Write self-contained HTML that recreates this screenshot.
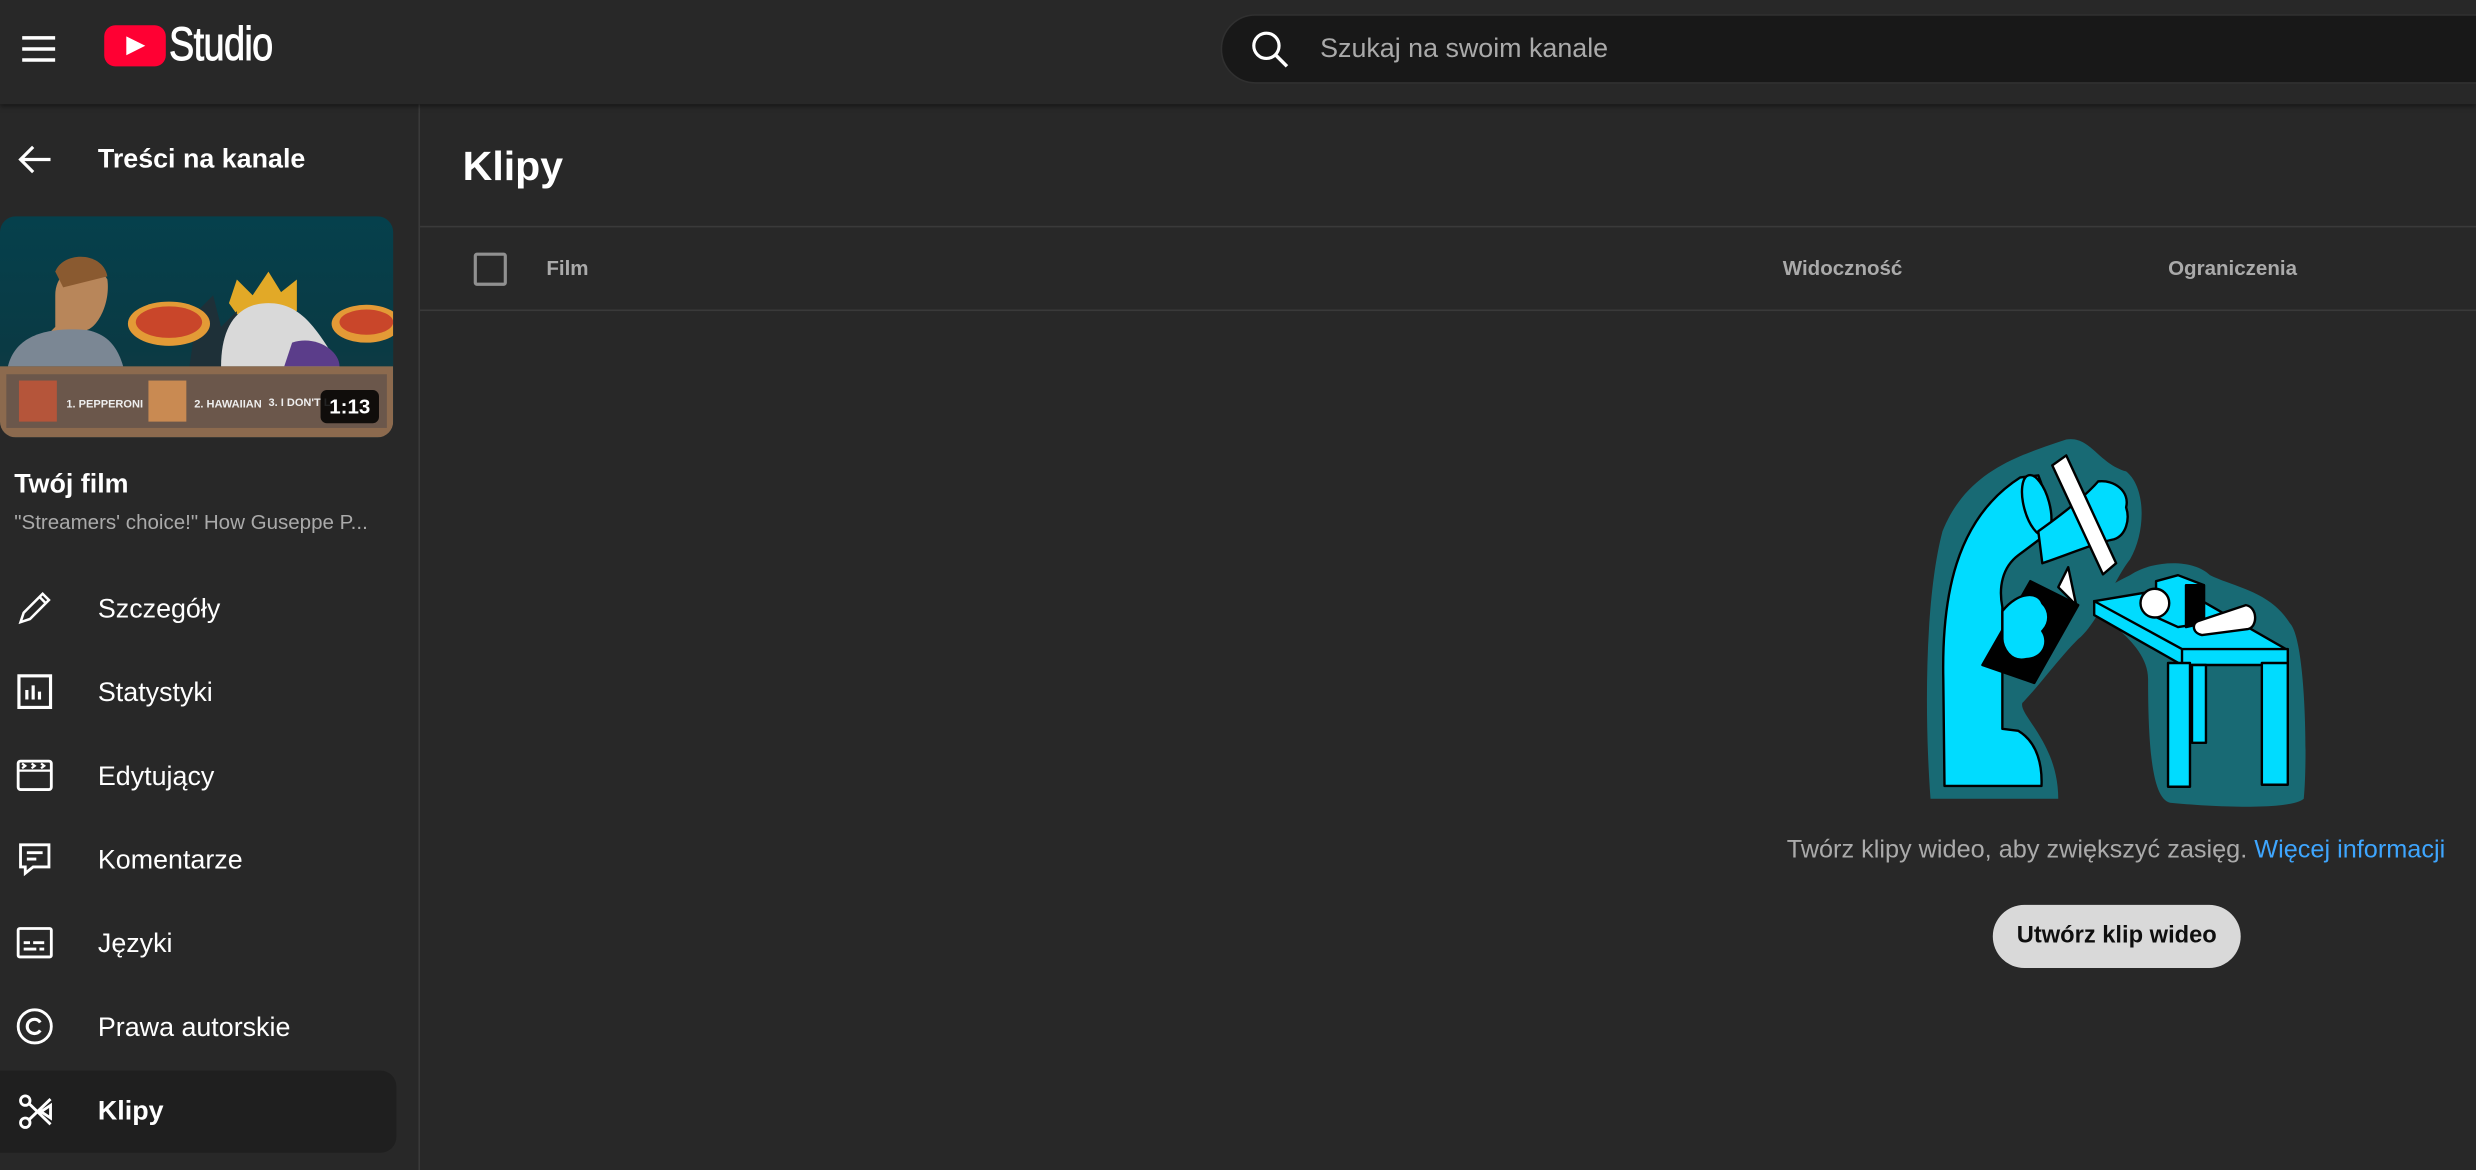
<!DOCTYPE html>
<html><head><meta charset="utf-8">
<style>
html,body{margin:0;padding:0;background:#282828;overflow:hidden;width:2476px;height:1170px}
#w{position:absolute;left:0;top:0;width:1568px;height:741px;transform:scale(1.57908);transform-origin:0 0;background:#282828;font-family:"Liberation Sans",Roboto,sans-serif;color:#fff}
.a{position:absolute}
.top{left:0;top:0;width:1568px;height:66px;background:#282828;box-shadow:0 1px 3px rgba(0,0,0,.5);z-index:2}
.side{left:0;top:66px;width:265px;height:675px;border-right:1px solid #3a3a3a}
.nav{left:62px;font-size:17px;color:#fff}
.ic{left:10px;width:24px;height:24px}
.hl{left:266px;width:1302px;height:1px;background:#3a3a3a}
.th{font-size:13px;color:#aaa;font-weight:bold}
</style></head><body><div id="w">
<div class="a top">
  <svg class="a" style="left:14px;top:22px" width="21" height="18" viewBox="0 0 21 18"><path d="M0 2H21M0 9H21M0 16H21" stroke="#fff" stroke-width="2.2"/></svg>
  <div class="a" style="left:66px;top:16px;width:39px;height:26px;background:#ff0033;border-radius:7px"></div>
  <svg class="a" style="left:79px;top:22px" width="14" height="14" viewBox="0 0 14 14"><path d="M1 1L13 7L1 13Z" fill="#fff"/></svg>
  <div class="a" style="left:107px;top:12px;font-size:30px;font-family:'Liberation Sans Narrow','Liberation Sans',sans-serif;transform:scaleX(.8);transform-origin:0 0;letter-spacing:-0.5px;-webkit-text-stroke:.6px #fff">Studio</div>
  <div class="a" style="left:773px;top:9px;width:820px;height:44px;background:#181818;border:1px solid #303030;border-radius:22px;box-sizing:border-box"></div>
  <svg class="a" style="left:792px;top:19px" width="25" height="25" viewBox="0 0 25 25"><circle cx="10" cy="10" r="8" fill="none" stroke="#fff" stroke-width="2"/><path d="M16 16L23 23" stroke="#fff" stroke-width="2.2"/></svg>
  <div class="a" style="left:836px;top:21px;font-size:17px;color:#aaa">Szukaj na swoim kanale</div>
</div>
<div class="a side"></div>
<svg class="a" style="left:10px;top:89px" width="24" height="24" viewBox="0 0 24 24"><path d="M22 12H3M11 4L3 12L11 20" fill="none" stroke="#fff" stroke-width="2"/></svg>
<div class="a" style="left:62px;top:91px;font-size:17px;font-weight:bold">Treści na kanale</div>
<div class="a" style="left:0;top:137px;width:249px;height:140px;border-radius:10px;overflow:hidden;background:linear-gradient(#05404c,#0a3a44 60%,#1d3a40)">
  <svg width="249" height="140" viewBox="0 0 249 140">
    <path d="M145 55L150 40L160 50L170 35L178 48L188 40L188 60L150 62Z" fill="#e2a927"/>
    <path d="M120 95L125 60L135 50L140 70L150 60V95Z" fill="#1e3038"/>
    <path d="M140 95C140 70 150 55 170 55C190 55 200 70 215 95Z" fill="#d9d9d9"/>
    <path d="M185 80C200 75 215 85 215 95H180Z" fill="#5b3d8a"/>
    <path d="M35 50C35 30 60 25 68 40C70 55 62 70 55 72L60 80H25L35 70Z" fill="#b8865a"/>
    <path d="M35 35C40 22 65 22 68 38L40 45Z" fill="#8a5a30"/>
    <path d="M5 95C10 75 30 70 55 72C70 75 75 85 78 95Z" fill="#7b8794"/>
    <ellipse cx="107" cy="68" rx="26" ry="14" fill="#e39a36"/><ellipse cx="107" cy="67" rx="21" ry="10" fill="#c9462a"/>
    <ellipse cx="232" cy="68" rx="22" ry="12" fill="#e39a36"/><ellipse cx="232" cy="67" rx="17" ry="8" fill="#c9462a"/>
    <rect x="0" y="95" width="249" height="45" fill="#8c6a4e"/>
    <rect x="4" y="100" width="241" height="34" fill="#6b574b"/>
    <rect x="12" y="104" width="24" height="26" fill="#b5553a"/>
    <rect x="94" y="104" width="24" height="26" fill="#c98a52"/>
    <text x="42" y="121" font-size="7" fill="#eee" font-family="Liberation Sans Narrow,Liberation Sans" font-weight="bold">1. PEPPERONI</text>
    <text x="123" y="121" font-size="7" fill="#eee" font-family="Liberation Sans Narrow,Liberation Sans" font-weight="bold">2. HAWAIIAN</text>
    <text x="170" y="120" font-size="7" fill="#eee" font-family="Liberation Sans Narrow,Liberation Sans" font-weight="bold">3. I DON'T L</text>
  </svg>
  <div class="a" style="left:203px;top:110px;width:37px;height:21px;background:rgba(0,0,0,.85);border-radius:4px;font-size:13px;font-weight:bold;text-align:center;line-height:21px">1:13</div>
</div>
<div class="a" style="left:9px;top:297px;font-size:17px;font-weight:bold">Twój film</div>
<div class="a" style="left:9px;top:323px;font-size:13px;color:#aaa">"Streamers' choice!" How Guseppe P...</div>
<div class="a" style="left:0;top:678px;width:251px;height:52px;background:#1f1f1f;border-radius:0 10px 10px 0"></div>
<svg class="a ic" style="top:373px" viewBox="0 0 24 24"><path d="M3 21L5 15L17 3L21 7L9 19Z M15 5L19 9" fill="none" stroke="#fff" stroke-width="1.6"/></svg>
<div class="a nav" style="top:376px">Szczegóły</div>
<svg class="a ic" style="top:426px" viewBox="0 0 24 24"><rect x="2" y="2" width="20" height="20" fill="none" stroke="#fff" stroke-width="2"/><path d="M7 17V11M11 17V8M15 17V12" stroke="#fff" stroke-width="2"/></svg>
<div class="a nav" style="top:429px">Statystyki</div>
<svg class="a ic" style="top:479px" viewBox="0 0 24 24"><rect x="1.5" y="3" width="21" height="18" rx="1.5" fill="none" stroke="#fff" stroke-width="1.8"/><path d="M1.5 9H22.5M4 4.5L6 6L4 7.5M10 4.5L12 6L10 7.5M16 4.5L18 6L16 7.5" fill="none" stroke="#fff" stroke-width="1.4"/></svg>
<div class="a nav" style="top:482px">Edytujący</div>
<svg class="a ic" style="top:532px" viewBox="0 0 24 24"><path d="M3 3H21V17H11L6 21V17H3Z M7 8H17M7 12H13" fill="none" stroke="#fff" stroke-width="1.8"/></svg>
<div class="a nav" style="top:535px">Komentarze</div>
<svg class="a ic" style="top:585px" viewBox="0 0 24 24"><rect x="1.5" y="3" width="21" height="18" rx="1" fill="none" stroke="#fff" stroke-width="1.8"/><path d="M5 12H9M11 12H18M5 16H13M15 16H18" stroke="#fff" stroke-width="1.8"/></svg>
<div class="a nav" style="top:588px">Języki</div>
<svg class="a ic" style="top:638px" viewBox="0 0 24 24"><circle cx="12" cy="12" r="10.5" fill="none" stroke="#fff" stroke-width="1.8"/><path d="M15.5 9.5A4.5 4.5 0 1 0 15.5 14.5" fill="none" stroke="#fff" stroke-width="2"/></svg>
<div class="a nav" style="top:641px">Prawa autorskie</div>
<svg class="a ic" style="top:692px" viewBox="0 0 24 24"><circle cx="6" cy="5" r="3" fill="none" stroke="#fff" stroke-width="1.8"/><circle cx="6" cy="19" r="3" fill="none" stroke="#fff" stroke-width="1.8"/><path d="M8.5 7L22 20M8.5 17L22 4M16 12L22 8V16Z" fill="none" stroke="#fff" stroke-width="1.8"/></svg>
<div class="a nav" style="top:694px;font-weight:bold">Klipy</div>
<div class="a" style="left:293px;top:90px;font-size:26px;font-weight:bold">Klipy</div>
<div class="a hl" style="top:143px"></div>
<div class="a hl" style="top:196px"></div>
<div class="a" style="left:300px;top:160px;width:17px;height:17px;border:2px solid #909090;border-radius:2px"></div>
<div class="a th" style="left:346px;top:162px">Film</div>
<div class="a th" style="left:1129px;top:162px">Widoczność</div>
<div class="a th" style="left:1373px;top:162px">Ograniczenia</div>
<svg class="a" style="left:1171.6px;top:253.3px" width="396.4" height="380" viewBox="0 0 1568 1503">
  <path d="M200 1000C185 800 185 500 230 330C290 180 420 140 540 100C600 90 620 160 690 180C740 220 740 330 700 400C660 450 620 560 570 600C520 650 470 720 430 760C420 790 520 860 520 1000Z" fill="#186a74"/>
  <path d="M700 440C760 400 860 400 900 440C960 470 1050 480 1100 560C1140 600 1145 900 1135 1000C1100 1030 900 1020 800 1010C760 1000 745 900 745 700C745 620 650 560 600 520C620 480 660 460 700 440Z" fill="#186a74"/>
  <g stroke="#000" stroke-width="6" stroke-linejoin="round">
   <path d="M235 968L232 700C228 500 260 300 425 195L470 190C495 250 500 320 480 345L420 390C380 420 370 470 380 520L380 825L420 830C470 860 480 920 478 968Z" fill="#00dcff"/>
   <ellipse cx="466" cy="265" rx="32" ry="78" transform="rotate(-15 466 265)" fill="#00dcff"/>
   <path d="M470 330C540 280 590 240 620 205C660 200 700 230 690 270C700 300 690 340 660 350C610 360 540 390 480 410Z" fill="#00dcff"/>
   <path d="M505 165L540 140L665 410L632 438Z" fill="#fff"/>
   <path d="M330 665L450 455L570 515L460 710Z" fill="#000"/>
   <path d="M380 530C420 480 470 480 480 510C500 530 500 560 480 580C500 610 480 650 440 650C400 660 380 620 380 600Z" fill="#00dcff"/>
   <path d="M520 470L545 420L565 515Z" fill="#fff"/>
   <path d="M610 505L820 470L1090 625L830 665Z" fill="#00dcff"/>
   <path d="M610 505V540L830 665V625Z M830 625H1095V665H830Z" fill="#00dcff"/>
   <rect x="795" y="660" width="55" height="310" fill="#00dcff"/>
   <rect x="855" y="665" width="35" height="195" fill="#00dcff"/>
   <rect x="1030" y="660" width="65" height="305" fill="#00dcff"/>
   <path d="M765 455L820 440L885 465L885 560L820 570L765 545Z" fill="#00dcff"/>
   <path d="M840 465L885 465L885 560L840 570Z" fill="#000"/>
   <circle cx="762" cy="510" r="36" fill="#fff"/>
   <path d="M870 555L990 515C1020 520 1020 570 995 575L880 590C855 585 855 560 870 555Z" fill="#fff"/>
  </g>
</svg>
<div class="a" style="left:1040px;top:530px;width:600px;text-align:center;font-size:16px;color:#aaa">Twórz klipy wideo, aby zwiększyć zasięg. <span style="color:#3ea6ff">Więcej informacji</span></div>
<div class="a" style="left:1262px;top:573px;width:157px;height:40px;background:#d9d9d9;border-radius:20px;color:#0f0f0f;font-size:15px;font-weight:bold;text-align:center;line-height:40px">Utwórz klip wideo</div>
</div></body></html>
